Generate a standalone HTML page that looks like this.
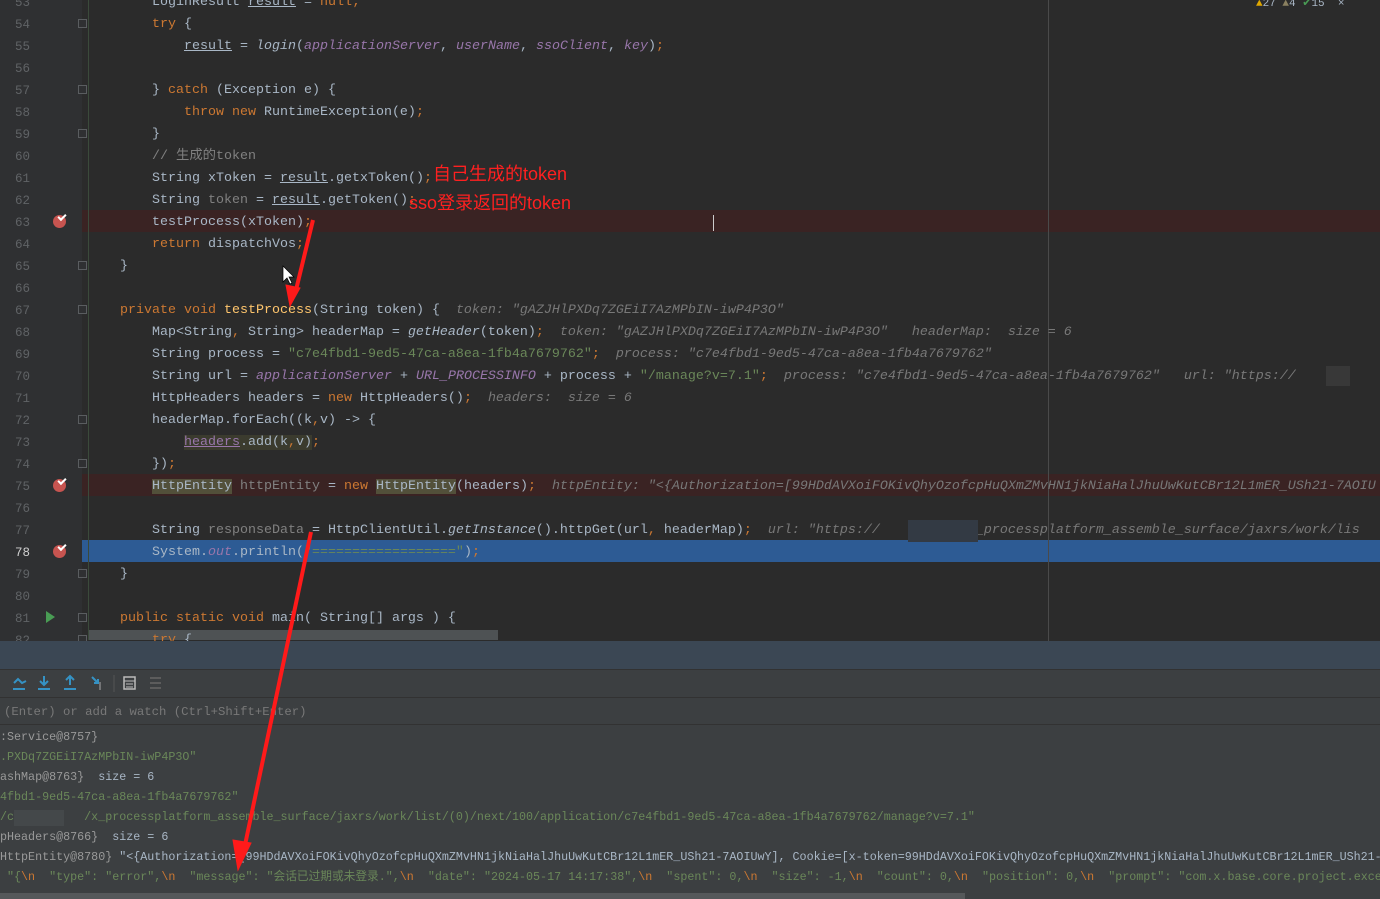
<!DOCTYPE html>
<html><head><meta charset="utf-8"><style>
*{margin:0;padding:0;box-sizing:border-box}
body{width:1380px;height:899px;overflow:hidden;background:#2b2b2b;position:relative;font-family:"Liberation Mono","Noto Sans CJK SC",monospace;}
.ed{position:absolute;left:0;top:0;width:1380px;height:641px;background:#2b2b2b;overflow:hidden}
.gut{position:absolute;left:0;top:0;width:82px;height:641px;background:#2f3032}
.ln{position:absolute;left:0;width:30px;text-align:right;color:#606366;font-size:12.5px;line-height:22px;height:22px}
.l{position:absolute;left:88px;white-space:pre;font-size:13.33px;line-height:22px;height:22px;color:#a9b7c6}
.k{color:#cc7832}.s{color:#6a8759}.c{color:#808080}.f{color:#9876aa;font-style:italic}.m{color:#ffc66d}
.i{font-style:italic}.h{color:#787878;font-style:italic}.g{color:#808080}
.u{text-decoration:underline}
.bp{position:absolute;left:53px;width:13px;height:13px;border-radius:50%;background:#c75450}
.bp:after{content:"";position:absolute;left:5px;top:-1px;width:6px;height:3px;border-left:2px solid #fff;border-bottom:2px solid #fff;transform:rotate(-45deg)}
.fold{position:absolute;left:78px;width:9px;height:9px;border:1px solid #5a5d60;background:#2f3032}
.v{position:absolute;left:0;white-space:pre;font-size:11.7px;line-height:20px;color:#a9b7c6}
.red{color:#ff2020;font-family:"Liberation Sans","Noto Sans CJK SC",sans-serif;font-size:18px;position:absolute;white-space:pre}
</style></head><body>
<div class="ed">
<div class="gut"></div>
<div style="position:absolute;left:82px;top:210px;width:1298px;height:22px;background:#3a2323"></div>
<div style="position:absolute;left:82px;top:474px;width:1298px;height:22px;background:#3a2323"></div>
<div style="position:absolute;left:82px;top:540px;width:1298px;height:22px;background:#2d5b94"></div>
<div style="position:absolute;left:1048px;top:0;width:1px;height:641px;background:#4a4a4a"></div>
<div style="position:absolute;left:88px;top:630px;width:410px;height:10px;background:#4e5254"></div>
<div style="position:absolute;left:88px;top:0;width:1px;height:640px;background:#3b4a3b"></div>
<div style="position:absolute;left:0;top:2px;width:100%;height:641px">
<div class="ln" style="top:-10px">53</div><div class="ln" style="top:12px">54</div><div class="ln" style="top:34px">55</div><div class="ln" style="top:56px">56</div><div class="ln" style="top:78px">57</div><div class="ln" style="top:100px">58</div><div class="ln" style="top:122px">59</div><div class="ln" style="top:144px">60</div><div class="ln" style="top:166px">61</div><div class="ln" style="top:188px">62</div><div class="ln" style="top:210px">63</div><div class="ln" style="top:232px">64</div><div class="ln" style="top:254px">65</div><div class="ln" style="top:276px">66</div><div class="ln" style="top:298px">67</div><div class="ln" style="top:320px">68</div><div class="ln" style="top:342px">69</div><div class="ln" style="top:364px">70</div><div class="ln" style="top:386px">71</div><div class="ln" style="top:408px">72</div><div class="ln" style="top:430px">73</div><div class="ln" style="top:452px">74</div><div class="ln" style="top:474px">75</div><div class="ln" style="top:496px">76</div><div class="ln" style="top:518px">77</div><div class="ln" style="top:540px;color:#d0d0d0">78</div><div class="ln" style="top:562px">79</div><div class="ln" style="top:584px">80</div><div class="ln" style="top:606px">81</div><div class="ln" style="top:628px">82</div>
<div class="bp" style="top:213px"></div><div class="bp" style="top:477px"></div><div class="bp" style="top:543px"></div>
<div style="position:absolute;left:46px;top:609px;width:0;height:0;border-left:9px solid #499c54;border-top:6px solid transparent;border-bottom:6px solid transparent"></div>
<div class="fold" style="top:17px"></div><div class="fold" style="top:83px"></div><div class="fold" style="top:127px"></div><div class="fold" style="top:259px"></div><div class="fold" style="top:303px"></div><div class="fold" style="top:413px"></div><div class="fold" style="top:457px"></div><div class="fold" style="top:567px"></div><div class="fold" style="top:611px"></div><div class="fold" style="top:633px"></div>

<div class="l" style="top:-10px">        LoginResult <span class="u">result</span> = <span class="k">null;</span></div>
<div class="l" style="top:12px">        <span class="k">try</span> {</div>
<div class="l" style="top:34px">            <span class="u">result</span> = <span class="i">login</span>(<span class="f">applicationServer</span>, <span class="f">userName</span>, <span class="f">ssoClient</span>, <span class="f">key</span>)<span class="k">;</span></div>
<div class="l" style="top:78px">        } <span class="k">catch</span> (Exception e) {</div>
<div class="l" style="top:100px">            <span class="k">throw new</span> RuntimeException(e)<span class="k">;</span></div>
<div class="l" style="top:122px">        }</div>
<div class="l" style="top:144px">        <span class="c">// 生成的token</span></div>
<div class="l" style="top:166px">        String xToken = <span class="u">result</span>.getxToken()<span class="k">;</span></div>
<div class="l" style="top:188px">        String <span class="g">token</span> = <span class="u">result</span>.getToken()<span class="k">;</span></div>
<div class="l" style="top:210px">        testProcess(xToken)<span class="k">;</span></div>
<div class="l" style="top:232px">        <span class="k">return</span> dispatchVos<span class="k">;</span></div>
<div class="l" style="top:254px">    }</div>
<div class="l" style="top:298px">    <span class="k">private void</span> <span class="m">testProcess</span>(String token) {  <span class="h">token: "gAZJHlPXDq7ZGEiI7AzMPbIN-iwP4P3O"</span></div>
<div class="l" style="top:320px">        Map&lt;String<span class="k">,</span> String&gt; headerMap = <span class="i">getHeader</span>(token)<span class="k">;</span>  <span class="h">token: "gAZJHlPXDq7ZGEiI7AzMPbIN-iwP4P3O"   headerMap:  size = 6</span></div>
<div class="l" style="top:342px">        String process = <span class="s">"c7e4fbd1-9ed5-47ca-a8ea-1fb4a7679762"</span><span class="k">;</span>  <span class="h">process: "c7e4fbd1-9ed5-47ca-a8ea-1fb4a7679762"</span></div>
<div class="l" style="top:364px">        String url = <span class="f">applicationServer</span> + <span class="f">URL_PROCESSINFO</span> + process + <span class="s">"/manage?v=7.1"</span><span class="k">;</span>  <span class="h">process: "c7e4fbd1-9ed5-47ca-a8ea-1fb4a7679762"   url: "https://</span></div>
<div class="l" style="top:386px">        HttpHeaders headers = <span class="k">new</span> HttpHeaders()<span class="k">;</span>  <span class="h">headers:  size = 6</span></div>
<div class="l" style="top:408px">        headerMap.forEach((k<span class="k">,</span>v) -&gt; {</div>
<div class="l" style="top:430px">            <span class="u" style="color:#9876aa;background:#3b3b2e">headers</span><span style="background:#3b3b2e">.add(k<span class="k">,</span>v)</span><span class="k">;</span></div>
<div class="l" style="top:452px">        })<span class="k">;</span></div>
<div class="l" style="top:474px">        <span style="background:#52503a">HttpEntity</span> <span class="g">httpEntity</span> = <span class="k">new</span> <span style="background:#52503a">HttpEntity</span>(headers)<span class="k">;</span>  <span class="h">httpEntity: "&lt;{Authorization=[99HDdAVXoiFOKivQhyOzofcpHuQXmZMvHN1jkNiaHalJhuUwKutCBr12L1mER_USh21-7AOIU</span></div>
<div class="l" style="top:518px">        String <span class="g">responseData</span> = HttpClientUtil.<span class="i">getInstance</span>().httpGet(url<span class="k">,</span> headerMap)<span class="k">;</span>  <span class="h">url: "https://          /x_processplatform_assemble_surface/jaxrs/work/lis</span></div>
<div class="l" style="top:540px">        System.<span class="f">out</span>.println(<span class="s">"=================="</span>)<span class="k">;</span></div>
<div class="l" style="top:562px">    }</div>
<div class="l" style="top:606px">    <span class="k">public static void</span> main( String[] args ) {</div>
<div class="l" style="top:628px">        <span class="k">try</span> {</div>
</div>
<div style="position:absolute;left:1326px;top:366px;width:24px;height:20px;background:#383838"></div>
<div style="position:absolute;left:908px;top:520px;width:70px;height:22px;background:#333a44"></div>
<div style="position:absolute;left:1256px;top:0;font-size:11px;color:#a9b7c6;white-space:pre;line-height:8px"><span style="color:#e0a800">▲</span>27 <span style="color:#8a8060">▲</span>4 <span style="color:#499c54">✔</span>15  ×</div>
<div class="red" style="left:433px;top:160px">自己生成的token</div>
<div class="red" style="left:409px;top:189px">sso登录返回的token</div>
<div style="position:absolute;left:713px;top:215px;width:1px;height:16px;background:#ccc"></div>
</div>
<div style="position:absolute;left:0;top:641px;width:1380px;height:28px;background:#3b4754"></div>
<div style="position:absolute;left:0;top:669px;width:1380px;height:230px;background:#3c3f41"></div>
<div style="position:absolute;left:0;top:669px;width:1380px;height:1px;background:#323232"></div>
<div style="position:absolute;left:0;top:697px;width:1380px;height:1px;background:#323232"></div>
<div style="position:absolute;left:0;top:724px;width:1380px;height:1px;background:#323232"></div>
<svg style="position:absolute;left:0;top:670px" width="170" height="26">
<g stroke="#3592c4" stroke-width="2" fill="none">
<path d="M13 19h12M14 13l4-4 4 4 4-2"/><path d="M38 19h12M44 6v9M40 11l4 4 4-4"/><path d="M64 19h12M70 15v-9M66 10l4-4 4 4"/><path d="M92 7l6 6M98 9v4h-4"/></g>
<path d="M100 12v8" stroke="#aaa"/>
<line x1="114" y1="5" x2="114" y2="22" stroke="#555"/>
<rect x="124" y="7" width="11" height="12" fill="none" stroke="#bbb" stroke-width="1.5"/><path d="M124 11h11M126 14h7M126 17h7" stroke="#bbb"/>
<path d="M150 8h11M150 13h11M150 18h11" stroke="#666" stroke-width="1.5"/>
</svg>
<div class="v" style="left:4px;top:702px;color:#787878;font-size:12.3px">(Enter) or add a watch (Ctrl+Shift+Enter)</div>
<div class="v" style="top:727px;color:#999">:Service@8757}</div>
<div class="v" style="top:747px;color:#6a8759">.PXDq7ZGEiI7AzMPbIN-iwP4P3O"</div>
<div class="v" style="top:767px"><span style="color:#999">ashMap@8763}</span>  size = 6</div>
<div class="v" style="top:787px;color:#6a8759">4fbd1-9ed5-47ca-a8ea-1fb4a7679762"</div>
<div class="v" style="top:807px;color:#6a8759">/c          /x_processplatform_assemble_surface/jaxrs/work/list/(0)/next/100/application/c7e4fbd1-9ed5-47ca-a8ea-1fb4a7679762/manage?v=7.1"</div>
<div style="position:absolute;left:14px;top:810px;width:50px;height:16px;background:#44484a"></div>
<div class="v" style="top:847px"><span style="color:#999">HttpEntity@8780}</span> "&lt;{Authorization=[99HDdAVXoiFOKivQhyOzofcpHuQXmZMvHN1jkNiaHalJhuUwKutCBr12L1mER_USh21-7AOIUwY], Cookie=[x-token=99HDdAVXoiFOKivQhyOzofcpHuQXmZMvHN1jkNiaHalJhuUwKutCBr12L1mER_USh21-7</div>
<div class="v" style="top:827px"><span style="color:#999">pHeaders@8766}</span>  size = 6</div>
<div class="v" style="top:867px;color:#6a8759"> "{<span class="k">\n</span>  "type": "error",<span class="k">\n</span>  "message": "会话已过期或未登录.",<span class="k">\n</span>  "date": "2024-05-17 14:17:38",<span class="k">\n</span>  "spent": 0,<span class="k">\n</span>  "size": -1,<span class="k">\n</span>  "count": 0,<span class="k">\n</span>  "position": 0,<span class="k">\n</span>  "prompt": "com.x.base.core.project.exce</div>
<div style="position:absolute;left:0;top:893px;width:965px;height:6px;background:#55585a"></div>
<svg style="position:absolute;left:0;top:0" width="1380" height="899">
<g fill="#ff1a1a" stroke="#ff1a1a">
<line x1="313" y1="220" x2="296" y2="290" stroke-width="4"/>
<path d="M286 285l4 21 10-18z"/>
<line x1="311" y1="532" x2="245" y2="845" stroke-width="4"/>
<path d="M233 840l5 30 13-27z"/>
</g>
<path d="M283 266v16l4-4 3 6 2-1-3-6h5z" fill="#fff" stroke="#000" stroke-width=".7"/>
</svg>
</body></html>
